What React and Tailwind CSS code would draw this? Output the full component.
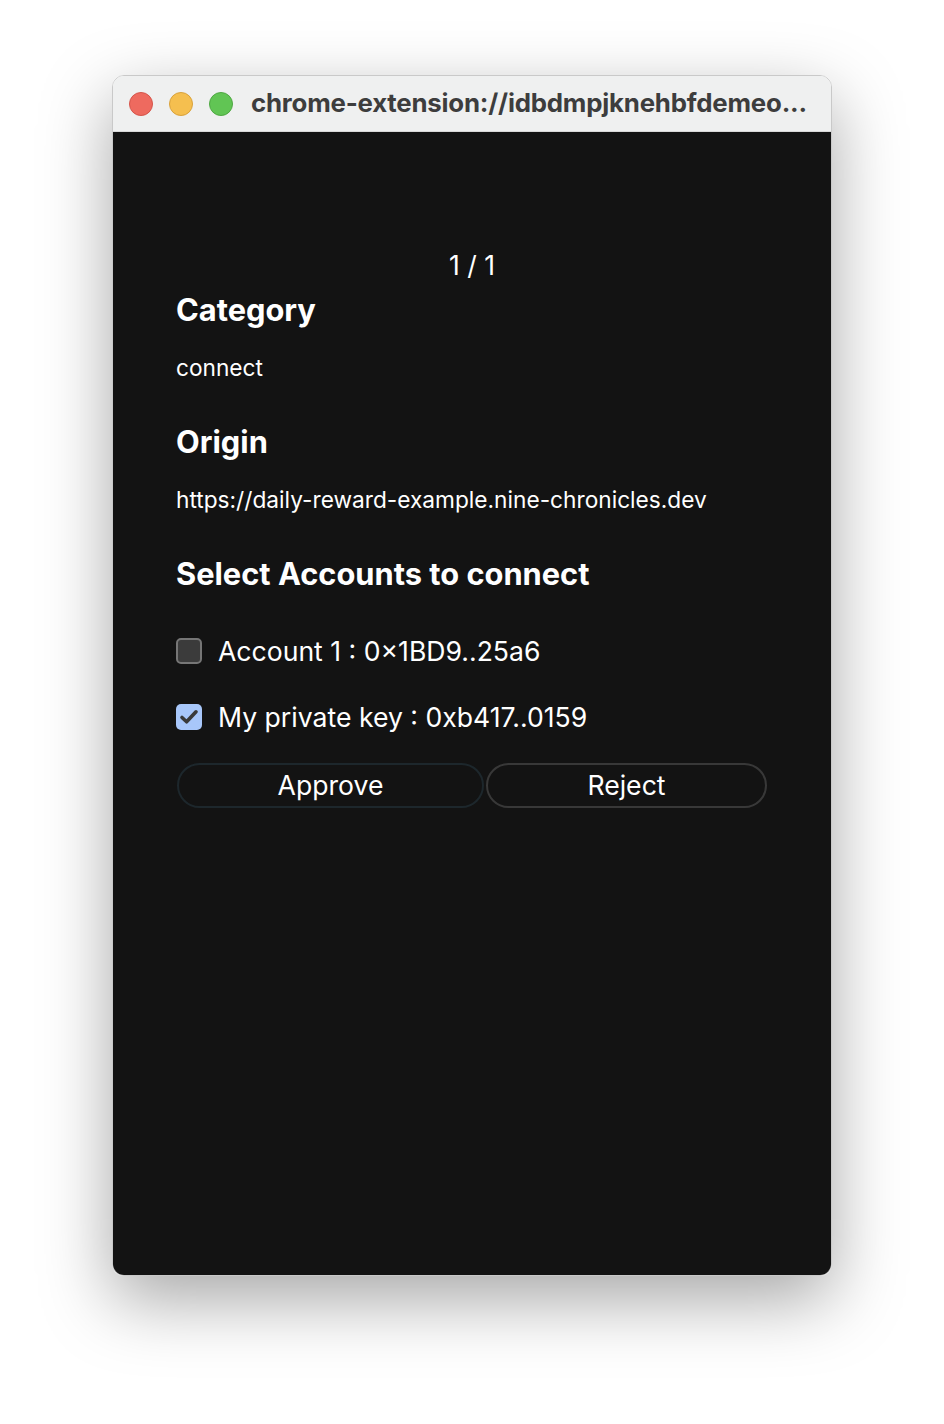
import React from "react";

const accounts = [
    { label: "Account 1 : 0×1BD9..25a6", checked: false },
    { label: "My private key : 0xb417..0159", checked: true },
];

function Checkbox({ checked }) {
    if (checked) {
        return (
            <div className="w-[26px] h-[26px] rounded-[5px] bg-[#a8c7fa] flex items-center justify-center shrink-0">
                <svg width="22" height="22" viewBox="0 0 22 22" fill="none">
                    <path d="M4 11.5 L8.6 15.8 L18 5.8" stroke="#3a3a3a" strokeWidth="3.6" strokeLinecap="round" strokeLinejoin="round" />
                </svg>
            </div>
        );
    }
    return (
        <div className="w-[26px] h-[26px] rounded-[5px] bg-[#3b3b3b] border-2 border-[#767676] shrink-0" />
    );
}

function TitleBar() {
    return (
        <div className="h-[56px] bg-[#eff0f0] flex items-center pl-[16px] gap-[16px] border-b border-[#d8d8d8]">
            <div className="flex items-center gap-[16px]">
                <div className="w-[24px] h-[24px] rounded-full bg-[#ee6a5f] border border-[#d5554b]" />
                <div className="w-[24px] h-[24px] rounded-full bg-[#f5bf4f] border border-[#d9a23c]" />
                <div className="w-[24px] h-[24px] rounded-full bg-[#61c554] border border-[#4fa843]" />
            </div>
            <span className="ml-[2px] text-[25.8px] font-bold text-[#3d3d3d] tracking-[-0.2px] whitespace-nowrap">
                chrome-extension://idbdmpjknehbfdemeo...
            </span>
        </div>
    );
}

export default function App() {
    return (
        <div className="w-full h-[1424px] bg-white pt-[75px] font-['Inter','Noto_Sans',sans-serif]">
            <div className="mx-auto w-[720px] h-[1201px] rounded-[12px] overflow-hidden border border-[#c9c9c9] shadow-[0_24px_70px_rgba(0,0,0,0.35)] flex flex-col">
                <TitleBar />
                <div className="flex-1 bg-[#131313] text-white px-[63px] pt-[117px]">
                    <div className="text-center text-[26.5px] leading-[32px]">1 / 1</div>
                    <h2 className="mt-[11px] text-[30.8px] leading-[36px] font-bold">Category</h2>
                    <p className="mt-[26px] text-[22.7px] leading-[28px]">connect</p>
                    <h2 className="mt-[42px] text-[30.8px] leading-[36px] font-bold">Origin</h2>
                    <p className="mt-[26px] text-[22.7px] leading-[28px]">https://daily-reward-example.nine-chronicles.dev</p>
                    <h2 className="mt-[42px] text-[30.8px] leading-[36px] font-bold">Select Accounts to connect</h2>
                    <div className="mt-[43px] flex flex-col gap-[34px]">
                        {accounts.map((a) => (
                            <label key={a.label} className="flex items-center gap-[16px] h-[32px]">
                                <Checkbox checked={a.checked} />
                                <span className="text-[26.6px] leading-[32px]">{a.label}</span>
                            </label>
                        ))}
                    </div>
                    <div className="mt-[30px] ml-[1px] flex gap-[2px]">
                        <button className="w-[307px] h-[45px] rounded-full border-2 border-[#1d272c] text-[26.6px] text-white">
                            Approve
                        </button>
                        <button className="w-[281px] h-[45px] rounded-full border-2 border-[#383838] text-[26.6px] text-white">
                            Reject
                        </button>
                    </div>
                </div>
            </div>
        </div>
    );
}
